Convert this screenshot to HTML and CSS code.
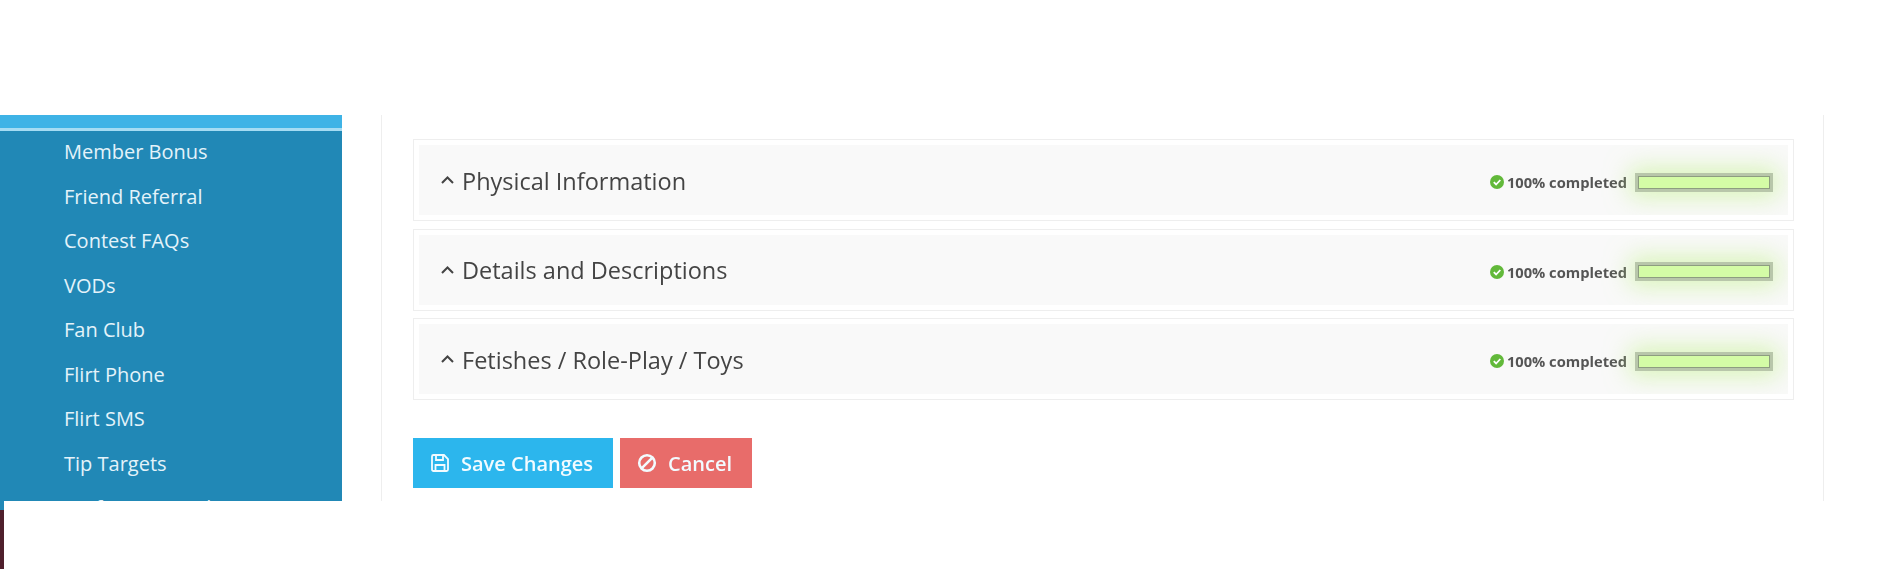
FILE: index.html
```html
<!doctype html>
<html>
<head>
<meta http-equiv="Content-Type" content="text/html; charset=utf-8"/>
<title>Profile</title>
<link rel="stylesheet" href="styles.css">
</head>

<body>
<div class="stage">
	<div class="side">
		<div class="side-top"></div>
		<ul>
			<li>Member Bonus</li>
			<li>Friend Referral</li>
			<li>Contest FAQs</li>
			<li>VODs</li>
			<li>Fan Club</li>
			<li>Flirt Phone</li>
			<li>Flirt SMS</li>
			<li>Tip Targets</li>
			<li>Preference Desk</li>
		</ul>
	</div>
	<div class="main">
		<div class="card">
			<div class="card-head">
				<svg class="caret" viewBox="0 0 14 8"><path d="M1.5 7 7 1.5 12.5 7"/></svg>
				<span class="card-title">Physical Information</span>
				<svg class="tick" viewBox="0 0 14 14"><circle cx="7" cy="7" r="7"/><path d="M3.8 7.2 6.1 9.5 10.3 5"/></svg>
				<span class="done">100% completed</span>
				<div class="bar"></div>
			</div>
		</div>
		<div class="card">
			<div class="card-head">
				<svg class="caret" viewBox="0 0 14 8"><path d="M1.5 7 7 1.5 12.5 7"/></svg>
				<span class="card-title">Details and Descriptions</span>
				<svg class="tick" viewBox="0 0 14 14"><circle cx="7" cy="7" r="7"/><path d="M3.8 7.2 6.1 9.5 10.3 5"/></svg>
				<span class="done">100% completed</span>
				<div class="bar"></div>
			</div>
		</div>
		<div class="card">
			<div class="card-head">
				<svg class="caret" viewBox="0 0 14 8"><path d="M1.5 7 7 1.5 12.5 7"/></svg>
				<span class="card-title">Fetishes / Role-Play / Toys</span>
				<svg class="tick" viewBox="0 0 14 14"><circle cx="7" cy="7" r="7"/><path d="M3.8 7.2 6.1 9.5 10.3 5"/></svg>
				<span class="done">100% completed</span>
				<div class="bar"></div>
			</div>
		</div>
		<div class="btns">
			<a href="javascript:;" class="btn btn-save">
				<svg viewBox="0 0 20 20"><path d="M2 3.5A1.5 1.5 0 0 1 3.500 2H14l4 4v10.500a1.500 1.500 0 0 1-1.500 1.500h-13A1.500 1.500 0 0 1 2 16.500z"/><path d="M6 2.500V7h7V2.500M5.500 18v-6h9v6"/></svg>
				Save Changes
			</a>
			<a href="javascript:;" class="btn btn-cancel">
				<svg viewBox="0 0 20 20"><circle cx="10" cy="10" r="7.800"/><path d="M4.600 15.400 15.400 4.600"/></svg>
				Cancel
			</a>
		</div>
	</div>
</div>
<div class="edge"></div>
</body>
</html>
```

FILE: styles.css
```css
*{ margin:0; padding:0; list-style:none; box-sizing:border-box;}
html,body{ height:569px; overflow:hidden; background:#fff;}
body{ font-family:"Open Sans","Noto Sans",sans-serif;}

/* the shot is an upscaled one, everything in it is a little soft */
.stage{ display:flex; height:386px; margin-top:115px; filter:blur(.45px);}

.side{ width:342px; height:386px; overflow:hidden; background:#2188b6; color:#e4f3fa; font-size:20px;}
.side-top{ height:16px; background:#3eb3e6; border-bottom:3px solid #a5dcf3;}
.side ul{ margin-top:-1px; padding:0 0 0 64px;}
.side li{ height:44.5px; line-height:44.5px;}

.main{ width:1443px; height:386px; margin-left:39px; padding:24px 29px 0 31px; border-left:1px solid #eee; border-right:1px solid #eee; overflow:hidden;}

.card{ height:82px; margin-bottom:7.500px; padding:5px; border:1px solid #eee; background:#fff;}
.card-head{ display:flex; align-items:center; height:70px; padding:0 18px 0 21px; background:#f9f9f9; overflow:hidden;}
.caret{ width:15px; height:8px; margin-right:7px; fill:none; stroke:#444; stroke-width:2;}
.card-title{ flex:1; margin-top:1px; font-size:23.500px; color:#444;}
.tick{ width:14px; height:14px; margin:4px 3px 0 0; fill:#62b93a; stroke:none;}
.tick path{ fill:none; stroke:#fff; stroke-width:1.800;}
.done{ margin:4px 11px 0 0; font-size:14.700px; font-weight:700; color:#555;}
.bar{ width:132px; height:13px; margin-top:4px; background:#d4fca6; border:1.500px solid #8d9d80; outline:3px solid #b8c6aa; box-shadow:0 0 24px 8px rgba(190,240,130,.55);}

.btns{ display:flex; gap:7px; margin-top:38px;}
.btn{ display:flex; align-items:center; height:50px; font-size:20px; font-weight:600; color:#f2fbff; text-decoration:none;}
.btn svg{ width:20px; height:20px; margin-right:11px; fill:none; stroke:#f2fbff; stroke-width:1.800;}
.btn-save{ width:200px; padding-left:17px; background:#2cb6ed;}
.btn-cancel{ width:132px; padding-left:17px; background:#e86c6a;}
.btn-cancel svg{ stroke-width:2.600;}

.edge{ width:4px; height:68px; background:linear-gradient(#2188b6 9px,#4f1f2c 9px);}
```
